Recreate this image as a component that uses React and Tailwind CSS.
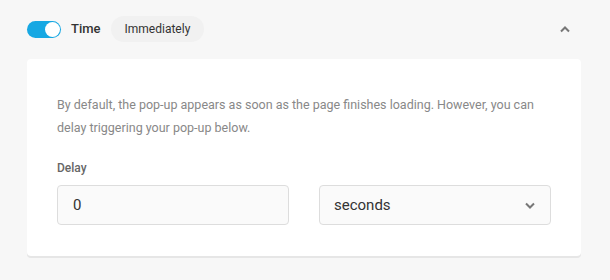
import React, { useState } from "react";

export default function App() {
  const [enabled, setEnabled] = useState(true);
  const [open, setOpen] = useState(true);
  const [delay, setDelay] = useState("0");
  const [unit, setUnit] = useState("seconds");

  return (
    <div
      className="w-[610px] h-[280px] bg-[#f7f7f7] pl-[27px] pr-[29px] pt-[16px] text-[#333]"
      style={{ fontFamily: "Roboto, 'Liberation Sans', sans-serif" }}
    >
      {/* Header */}
      <div className="flex items-center h-[26px]">
        <button
          onClick={() => setEnabled((v) => !v)}
          className={`relative w-[34px] h-[17px] rounded-full ${
            enabled ? "bg-[#17a8e3]" : "bg-[#ccc]"
          }`}
        >
          <span
            className={`absolute top-[1px] w-[15px] h-[15px] rounded-full bg-white ${
              enabled ? "left-[18px]" : "left-[1px]"
            }`}
          />
        </button>
        <span className="ml-[10px] text-[13px] font-medium text-[#333]">Time</span>
        <span className="ml-[10px] h-[26px] px-[14px] flex items-center rounded-full bg-[#f1f1f1] text-[12px] text-[#333]">
          Immediately
        </span>
        <button
          onClick={() => setOpen((v) => !v)}
          className="ml-auto mr-[11px] text-[#777]"
        >
          <svg width="10" height="7" viewBox="0 0 10 7" fill="none">
            <path
              d={open ? "M1 5.5L5 1.5L9 5.5" : "M1 1.5L5 5.5L9 1.5"}
              stroke="currentColor"
              strokeWidth="2"
            />
          </svg>
        </button>
      </div>

      {/* Card */}
      {open && (
        <div className="mt-[17px] bg-white rounded-[4px] shadow-[0_2px_0_#e6e6e6] px-[30px] pt-[34px] pb-[31px]">
          <p className="text-[12.5px] leading-[23px] text-[#888]">
            By default, the pop-up appears as soon as the page finishes loading. However, you can
            delay triggering your pop-up below.
          </p>
          <div className="mt-[21px] text-[12px] leading-[16px] font-medium text-[#666]">Delay</div>
          <div className="mt-[9px] grid grid-cols-2 gap-[30px]">
            <input
              value={delay}
              onChange={(e) => setDelay(e.target.value)}
              className="h-[40px] px-[15px] bg-[#fafafa] border border-[#ddd] rounded-[4px] text-[15px] text-[#333] outline-none"
            />
            <div className="relative">
              <select
                value={unit}
                onChange={(e) => setUnit(e.target.value)}
                className="w-full h-[40px] pl-[14px] pr-[40px] appearance-none bg-[#fafafa] border border-[#ddd] rounded-[4px] text-[15px] text-[#333] outline-none"
              >
                <option value="seconds">seconds</option>
                <option value="minutes">minutes</option>
              </select>
              <svg
                className="absolute right-[16px] top-[17px] text-[#777] pointer-events-none"
                width="10"
                height="7"
                viewBox="0 0 10 7"
                fill="none"
              >
                <path d="M1 1.5L5 5.5L9 1.5" stroke="currentColor" strokeWidth="2" />
              </svg>
            </div>
          </div>
        </div>
      )}
    </div>
  );
}
